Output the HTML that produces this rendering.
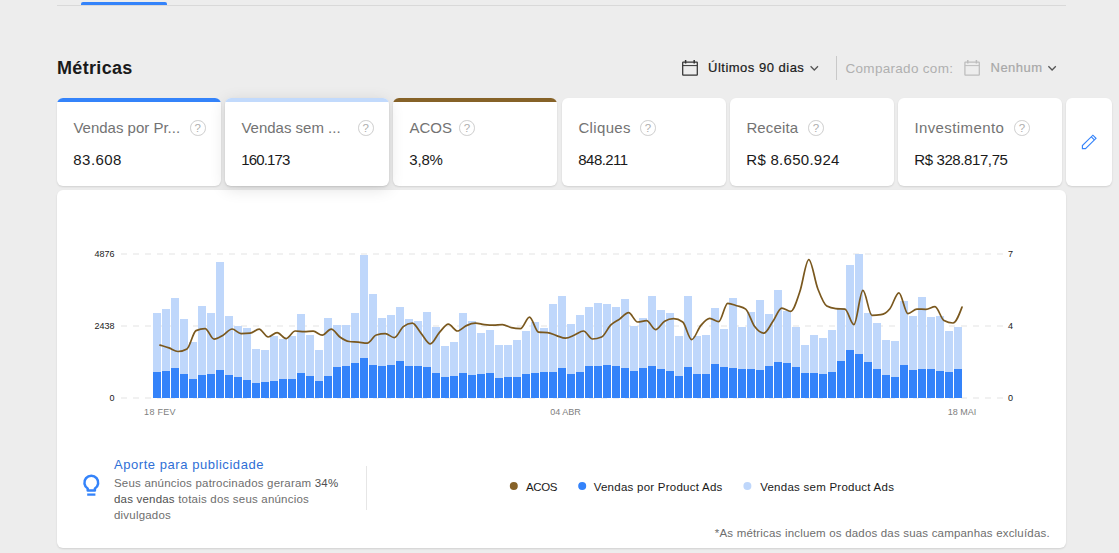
<!DOCTYPE html>
<html><head><meta charset="utf-8">
<style>
*{box-sizing:border-box;margin:0;padding:0}
html,body{width:1119px;height:553px;overflow:hidden;background:#ededed;font-family:"Liberation Sans",sans-serif;color:#1a1a1a}
.abs{position:absolute}
#topline{left:57px;top:5px;width:1009px;height:1px;background:#d9d9d9}
#topblue{left:81px;top:2px;width:86px;height:3px;background:#3483fa;border-radius:2px 2px 0 0}
#title{left:57px;top:56.5px;font-size:18px;font-weight:bold;line-height:22px;letter-spacing:0.33px}
.card{position:absolute;top:98px;height:88px;width:164px;background:#fff;border-radius:6px;box-shadow:0 1px 2px rgba(0,0,0,.12);overflow:hidden}
.card .strip{position:absolute;left:0;top:0;right:0;height:4px}
.card .lbl{position:absolute;left:16.4px;top:20.6px;font-size:15px;line-height:18px;color:#737373;white-space:nowrap}
.card .val{position:absolute;left:16.3px;top:52.5px;font-size:15px;line-height:18px;color:#1a1a1a;white-space:nowrap}
.q{position:absolute;top:22.2px;width:15.6px;height:15.6px;border:1.4px solid #cecece;border-radius:50%;font-size:11.5px;line-height:14.6px;text-align:center;color:#adadad}
#panel{left:57px;top:190px;width:1009px;height:358px;background:#fff;border-radius:6px;box-shadow:0 1px 2px rgba(0,0,0,.12)}
.semi{-webkit-text-stroke:.2px currentColor}
.lg{top:479.9px;font-size:11.5px;line-height:14px;letter-spacing:.25px;color:#1a1a1a;white-space:nowrap}
.card.hov{box-shadow:0 1px 2px rgba(0,0,0,.12),0 3px 16px rgba(0,0,0,.12);z-index:2}
</style></head><body>
<div id="topline" class="abs"></div>
<div id="topblue" class="abs"></div>
<div id="title" class="abs">Métricas</div>

<div class="card" style="left:57px"><div class="strip" style="background:#3483fa"></div><div class="lbl">Vendas por Pr...</div><div class="q" style="left:133.0px">?</div><div class="val" style="letter-spacing:.45px">83.608</div></div>
<div class="card hov" style="left:225px"><div class="strip" style="background:#c2dafc"></div><div class="lbl">Vendas sem ...</div><div class="q" style="left:133.0px">?</div><div class="val" style="letter-spacing:-.87px">160.173</div></div>
<div class="card" style="left:393px"><div class="strip" style="background:#866228"></div><div class="lbl">ACOS</div><div class="q" style="left:66.1px">?</div><div class="val" style="letter-spacing:-.2px">3,8%</div></div>
<div class="card" style="left:562px"><div class="lbl" style="letter-spacing:.36px">Cliques</div><div class="q" style="left:78.1px">?</div><div class="val" style="letter-spacing:-.55px">848.211</div></div>
<div class="card" style="left:730px"><div class="lbl" style="letter-spacing:.14px">Receita</div><div class="q" style="left:78.1px">?</div><div class="val" style="letter-spacing:.28px">R$ 8.650.924</div></div>
<div class="card" style="left:898px"><div class="lbl" style="letter-spacing:.4px">Investimento</div><div class="q" style="left:116.1px">?</div><div class="val" style="letter-spacing:-.4px">R$ 328.817,75</div></div>
<div class="card" style="left:1066px;width:46px"></div>

<div id="panel" class="abs"></div>
<svg class="abs" id="chart" style="left:0;top:0" width="1119" height="553" viewBox="0 0 1119 553">
<line x1="121" x2="1003" y1="254.0" y2="254.0" stroke="#e4e4e4" stroke-width="1.1" stroke-dasharray="6 6"/>
<line x1="121" x2="1003" y1="326.0" y2="326.0" stroke="#e4e4e4" stroke-width="1.1" stroke-dasharray="6 6"/>
<line x1="121" x2="1003" y1="398.0" y2="398.0" stroke="#e4e4e4" stroke-width="1.1" stroke-dasharray="6 6"/>
<path d="M153 313h8V372h-8zM162 309h8V371h-8zM171 298h8V368h-8zM180 319h8V374h-8zM189 342h8V379h-8zM198 306h8V375h-8zM207 313h8V374h-8zM216 262h8V370h-8zM225 316h8V375h-8zM234 326h8V377h-8zM243 328h8V380h-8zM252 349h8V383h-8zM261 350h8V382h-8zM270 336h8V381h-8zM279 339h8V379h-8zM288 336h8V379h-8zM297 314h8V373h-8zM306 335h8V376h-8zM315 350h8V381h-8zM324 318h8V376h-8zM333 325h8V367h-8zM342 325h8V366h-8zM351 313h8V363h-8zM360 255h8V358h-8zM369 294h8V365h-8zM378 318h8V366h-8zM387 315h8V365h-8zM396 307h8V361h-8zM405 319h8V366h-8zM414 321h8V366h-8zM423 312h8V367h-8zM432 327h8V373h-8zM441 346h8V377h-8zM450 342h8V376h-8zM459 313h8V373h-8zM468 321h8V375h-8zM477 333h8V374h-8zM486 330h8V373h-8zM495 345h8V378h-8zM504 345h8V377h-8zM513 340h8V377h-8zM522 331h8V374h-8zM531 322h8V373h-8zM540 328h8V372h-8zM549 304h8V372h-8zM558 296h8V368h-8zM567 324h8V374h-8zM576 315h8V372h-8zM585 307h8V366h-8zM594 303h8V366h-8zM603 304h8V365h-8zM612 307h8V366h-8zM621 299h8V368h-8zM630 326h8V371h-8zM639 318h8V368h-8zM648 296h8V366h-8zM657 310h8V369h-8zM666 313h8V371h-8zM675 336h8V376h-8zM684 296h8V367h-8zM693 336h8V374h-8zM702 335h8V374h-8zM711 308h8V364h-8zM720 329h8V367h-8zM729 298h8V368h-8zM738 327h8V369h-8zM747 312h8V369h-8zM756 300h8V370h-8zM765 314h8V366h-8zM774 290h8V362h-8zM783 311h8V363h-8zM792 327h8V367h-8zM801 345h8V373h-8zM810 335h8V373h-8zM819 338h8V374h-8zM828 330h8V372h-8zM837 308h8V361h-8zM846 265h8V350h-8zM855 254h8V354h-8zM864 313h8V362h-8zM873 323h8V369h-8zM882 340h8V375h-8zM891 341h8V377h-8zM900 301h8V365h-8zM909 316h8V370h-8zM918 297h8V369h-8zM927 317h8V369h-8zM936 316h8V371h-8zM945 331h8V372h-8zM954 327h8V369h-8z" fill="#bfd7fb" shape-rendering="crispEdges"/>
<path d="M153 372h8V398h-8zM162 371h8V398h-8zM171 368h8V398h-8zM180 374h8V398h-8zM189 379h8V398h-8zM198 375h8V398h-8zM207 374h8V398h-8zM216 370h8V398h-8zM225 375h8V398h-8zM234 377h8V398h-8zM243 380h8V398h-8zM252 383h8V398h-8zM261 382h8V398h-8zM270 381h8V398h-8zM279 379h8V398h-8zM288 379h8V398h-8zM297 373h8V398h-8zM306 376h8V398h-8zM315 381h8V398h-8zM324 376h8V398h-8zM333 367h8V398h-8zM342 366h8V398h-8zM351 363h8V398h-8zM360 358h8V398h-8zM369 365h8V398h-8zM378 366h8V398h-8zM387 365h8V398h-8zM396 361h8V398h-8zM405 366h8V398h-8zM414 366h8V398h-8zM423 367h8V398h-8zM432 373h8V398h-8zM441 377h8V398h-8zM450 376h8V398h-8zM459 373h8V398h-8zM468 375h8V398h-8zM477 374h8V398h-8zM486 373h8V398h-8zM495 378h8V398h-8zM504 377h8V398h-8zM513 377h8V398h-8zM522 374h8V398h-8zM531 373h8V398h-8zM540 372h8V398h-8zM549 372h8V398h-8zM558 368h8V398h-8zM567 374h8V398h-8zM576 372h8V398h-8zM585 366h8V398h-8zM594 366h8V398h-8zM603 365h8V398h-8zM612 366h8V398h-8zM621 368h8V398h-8zM630 371h8V398h-8zM639 368h8V398h-8zM648 366h8V398h-8zM657 369h8V398h-8zM666 371h8V398h-8zM675 376h8V398h-8zM684 367h8V398h-8zM693 374h8V398h-8zM702 374h8V398h-8zM711 364h8V398h-8zM720 367h8V398h-8zM729 368h8V398h-8zM738 369h8V398h-8zM747 369h8V398h-8zM756 370h8V398h-8zM765 366h8V398h-8zM774 362h8V398h-8zM783 363h8V398h-8zM792 367h8V398h-8zM801 373h8V398h-8zM810 373h8V398h-8zM819 374h8V398h-8zM828 372h8V398h-8zM837 361h8V398h-8zM846 350h8V398h-8zM855 354h8V398h-8zM864 362h8V398h-8zM873 369h8V398h-8zM882 375h8V398h-8zM891 377h8V398h-8zM900 365h8V398h-8zM909 370h8V398h-8zM918 369h8V398h-8zM927 369h8V398h-8zM936 371h8V398h-8zM945 372h8V398h-8zM954 369h8V398h-8z" fill="#3483fa" shape-rendering="crispEdges"/>
<path d="M160.0 345.1C163.0 346.0 166.0 346.8 169.0 347.9C172.0 349.0 175.0 351.5 178.0 351.5C181.0 351.5 184.0 350.6 187.0 348.9C190.0 347.2 193.0 331.9 196.0 330.6C199.0 329.3 202.1 328.6 205.1 328.6C208.1 328.6 211.1 339.2 214.1 339.2C217.1 339.2 220.1 336.9 223.1 335.2C226.1 333.5 229.1 329.0 232.1 329.0C235.1 329.0 238.1 333.6 241.1 333.6C244.1 333.6 247.1 333.5 250.1 333.2C253.1 332.9 256.1 329.2 259.1 329.2C262.1 329.2 265.1 337.0 268.1 337.0C271.1 337.0 274.1 332.6 277.1 332.6C280.1 332.6 283.2 338.6 286.2 338.6C289.2 338.6 292.2 331.0 295.2 331.0C298.2 331.0 301.2 331.6 304.2 331.6C307.2 331.6 310.2 331.2 313.2 331.2C316.2 331.2 319.2 335.2 322.2 335.2C325.2 335.2 328.2 329.2 331.2 329.2C334.2 329.2 337.2 335.2 340.2 337.3C343.2 339.4 346.2 341.1 349.2 341.5C352.2 341.9 355.2 341.8 358.2 342.1C361.3 342.4 364.3 343.1 367.3 343.1C370.3 343.1 373.3 335.9 376.3 335.0C379.3 334.1 382.3 333.6 385.3 333.6C388.3 333.6 391.3 337.6 394.3 337.6C397.3 337.6 400.3 328.9 403.3 326.6C406.3 324.3 409.3 323.2 412.3 323.2C415.3 323.2 418.3 330.2 421.3 333.6C424.3 337.1 427.3 343.9 430.3 343.9C433.3 343.9 436.3 335.9 439.3 332.6C442.4 329.3 445.4 324.2 448.4 324.2C451.4 324.2 454.4 331.0 457.4 331.0C460.4 331.0 463.4 326.9 466.4 325.6C469.4 324.3 472.4 323.2 475.4 323.2C478.4 323.2 481.4 324.3 484.4 324.6C487.4 324.9 490.4 325.2 493.4 325.2C496.4 325.2 499.4 324.6 502.4 324.6C505.4 324.6 508.4 326.9 511.4 327.6C514.4 328.3 517.4 328.6 520.4 328.6C523.5 328.6 526.5 317.1 529.5 317.1C532.5 317.1 535.5 331.9 538.5 332.2C541.5 332.5 544.5 332.3 547.5 332.6C550.5 332.9 553.5 334.7 556.5 335.6C559.5 336.5 562.5 338.2 565.5 338.2C568.5 338.2 571.5 336.2 574.5 335.0C577.5 333.8 580.5 331.0 583.5 331.0C586.5 331.0 589.5 339.0 592.5 339.0C595.5 339.0 598.5 338.3 601.6 337.0C604.6 335.7 607.6 328.2 610.6 325.2C613.6 322.2 616.6 321.2 619.6 319.1C622.6 317.0 625.6 312.7 628.6 312.7C631.6 312.7 634.6 322.0 637.6 322.0C640.6 322.0 643.6 320.6 646.6 320.6C649.6 320.6 652.6 329.6 655.6 329.6C658.6 329.6 661.6 322.9 664.6 321.2C667.6 319.5 670.6 318.7 673.6 318.7C676.6 318.7 679.6 319.8 682.7 322.0C685.7 324.2 688.7 339.6 691.7 339.6C694.7 339.6 697.7 329.2 700.7 325.6C703.7 322.1 706.7 318.3 709.7 318.3C712.7 318.3 715.7 321.6 718.7 321.6C721.7 321.6 724.7 303.3 727.7 303.3C730.7 303.3 733.7 304.7 736.7 305.7C739.7 306.7 742.7 306.8 745.7 309.1C748.7 311.4 751.7 322.6 754.7 326.6C757.7 330.6 760.7 333.2 763.8 333.2C766.8 333.2 769.8 325.8 772.8 321.6C775.8 317.4 778.8 308.1 781.8 308.1C784.8 308.1 787.8 311.3 790.8 311.3C793.8 311.3 796.8 300.4 799.8 291.8C802.8 283.2 805.8 259.6 808.8 259.6C811.8 259.6 814.8 281.1 817.8 288.8C820.8 296.5 823.8 304.4 826.8 306.1C829.8 307.8 832.8 308.4 835.8 308.7C838.8 309.0 841.9 308.8 844.9 309.1C847.9 309.4 850.9 324.6 853.9 324.6C856.9 324.6 859.9 290.4 862.9 290.4C865.9 290.4 868.9 315.3 871.9 315.3C874.9 315.3 877.9 315.1 880.9 314.7C883.9 314.3 886.9 312.4 889.9 308.7C892.9 305.1 895.9 292.8 898.9 292.8C901.9 292.8 904.9 313.7 907.9 313.7C910.9 313.7 913.9 309.1 916.9 309.1C919.9 309.1 923.0 309.3 926.0 309.3C929.0 309.3 932.0 306.7 935.0 306.7C938.0 306.7 941.0 319.0 944.0 320.6C947.0 322.2 950.0 323.0 953.0 323.0C956.0 323.0 959.0 315.1 962.0 307.1" fill="none" stroke="#7a581e" stroke-width="1.7" stroke-linejoin="round" stroke-linecap="round"/>
<text x="114.5" y="257.2" text-anchor="end" font-family="Liberation Sans, sans-serif" font-size="9" fill="#1a1a1a">4876</text>
<text x="114.5" y="329.2" text-anchor="end" font-family="Liberation Sans, sans-serif" font-size="9" fill="#1a1a1a">2438</text>
<text x="114.5" y="401.2" text-anchor="end" font-family="Liberation Sans, sans-serif" font-size="9" fill="#1a1a1a">0</text>
<text x="1008" y="257.2" font-family="Liberation Sans, sans-serif" font-size="9" fill="#1a1a1a">7</text>
<text x="1008" y="329.2" font-family="Liberation Sans, sans-serif" font-size="9" fill="#1a1a1a">4</text>
<text x="1008" y="401.2" font-family="Liberation Sans, sans-serif" font-size="9" fill="#1a1a1a">0</text>
<text x="160" y="414.7" text-anchor="middle" font-family="Liberation Sans, sans-serif" font-size="9" letter-spacing="0.3" fill="#808080">18 FEV</text>
<text x="565.5" y="414.7" text-anchor="middle" font-family="Liberation Sans, sans-serif" font-size="9" fill="#808080">04 ABR</text>
<text x="962" y="414.7" text-anchor="middle" font-family="Liberation Sans, sans-serif" font-size="9" fill="#808080">18 MAI</text>
</svg>

<!-- header controls -->
<svg class="abs" style="left:0;top:0;pointer-events:none" width="1119" height="553" viewBox="0 0 1119 553" fill="none">
 <!-- calendar 1 -->
 <g stroke="#333" stroke-width="1.25">
  <rect x="682.7" y="62" width="14.6" height="13.2" rx="0.5"/>
  <path d="M682.7 65.6H697.3" stroke-width="1"/><path d="M685.6 60.1V63.6M694.2 60.1V63.6" stroke-width="1.5"/>
 </g>
 <path d="M810.6 66.3L814.3 70L818 66.3" stroke="#555" stroke-width="1.3"/>
 <rect x="836" y="56" width="1" height="24" fill="#c9c9c9"/>
 <!-- calendar 2 -->
 <g stroke="#bdbdbd" stroke-width="1.25">
  <rect x="964.9" y="62" width="14.4" height="13.2" rx="0.5"/>
  <path d="M964.9 65.6H979.3" stroke-width="1"/><path d="M967.8 60.1V63.6M976.4 60.1V63.6" stroke-width="1.5"/>
 </g>
 <path d="M1048.4 66.3L1052.1 70L1055.8 66.3" stroke="#555" stroke-width="1.3"/>
 <!-- pencil -->
 <g stroke="#3483fa" stroke-width="1.15" stroke-linejoin="miter">
  <path d="M1082.4 148.6V145.6L1092.9 135.2L1096 138.3L1085.5 148.6Z"/>
  <path d="M1091.3 136.8L1094.4 139.9"/>
 </g>
 <!-- bulb -->
 <g stroke="#3483fa" stroke-width="2.5" stroke-linejoin="round">
  <path d="M87.7 490.6V488.5A6.9 6.9 0 1 1 94.9 488.5V490.6Z"/>
  <path d="M87.2 494.6H95.4" stroke-width="2.3"/>
 </g>
 <rect x="366" y="466" width="1" height="44" fill="#e6e6e6"/>
 <circle cx="513.8" cy="486.1" r="4" fill="#866228"/>
 <circle cx="582.2" cy="486.1" r="4" fill="#3483fa"/>
 <circle cx="747.4" cy="486.1" r="4" fill="#bfd7fb"/>
</svg>
<div class="abs semi" style="left:708px;top:60px;font-size:13px;line-height:16px;letter-spacing:.5px;color:#1a1a1a;white-space:nowrap">Últimos 90 dias</div>
<div class="abs" style="left:845.5px;top:60.7px;font-size:13.5px;line-height:16px;letter-spacing:.3px;color:#b0b0b0;white-space:nowrap">Comparado com:</div>
<div class="abs semi" style="left:990.5px;top:60px;font-size:13px;line-height:16px;letter-spacing:.5px;color:#a8a8a8;white-space:nowrap">Nenhum</div>

<div class="abs" style="left:114px;top:457.4px;font-size:13px;line-height:16px;letter-spacing:.55px;color:#2f6fd6;white-space:nowrap">Aporte para publicidade</div>
<div class="abs" style="left:114px;top:476.1px;font-size:11.5px;line-height:15.7px;letter-spacing:.2px;color:#6e6e6e;white-space:nowrap">Seus anúncios patrocinados geraram <span style="color:#505050">34%</span><br><span style="color:#505050">das vendas</span> totais dos seus anúncios<br>divulgados</div>

<div class="abs lg" style="left:526px;letter-spacing:-.35px">ACOS</div>
<div class="abs lg" style="left:593.7px">Vendas por Product Ads</div>
<div class="abs lg" style="left:760.2px">Vendas sem Product Ads</div>
<div class="abs" style="left:714.8px;top:524.6px;font-size:11.5px;line-height:16px;color:#6e6e6e;white-space:nowrap;letter-spacing:.185px">*As métricas incluem os dados das suas campanhas excluídas.</div>

</body></html>
